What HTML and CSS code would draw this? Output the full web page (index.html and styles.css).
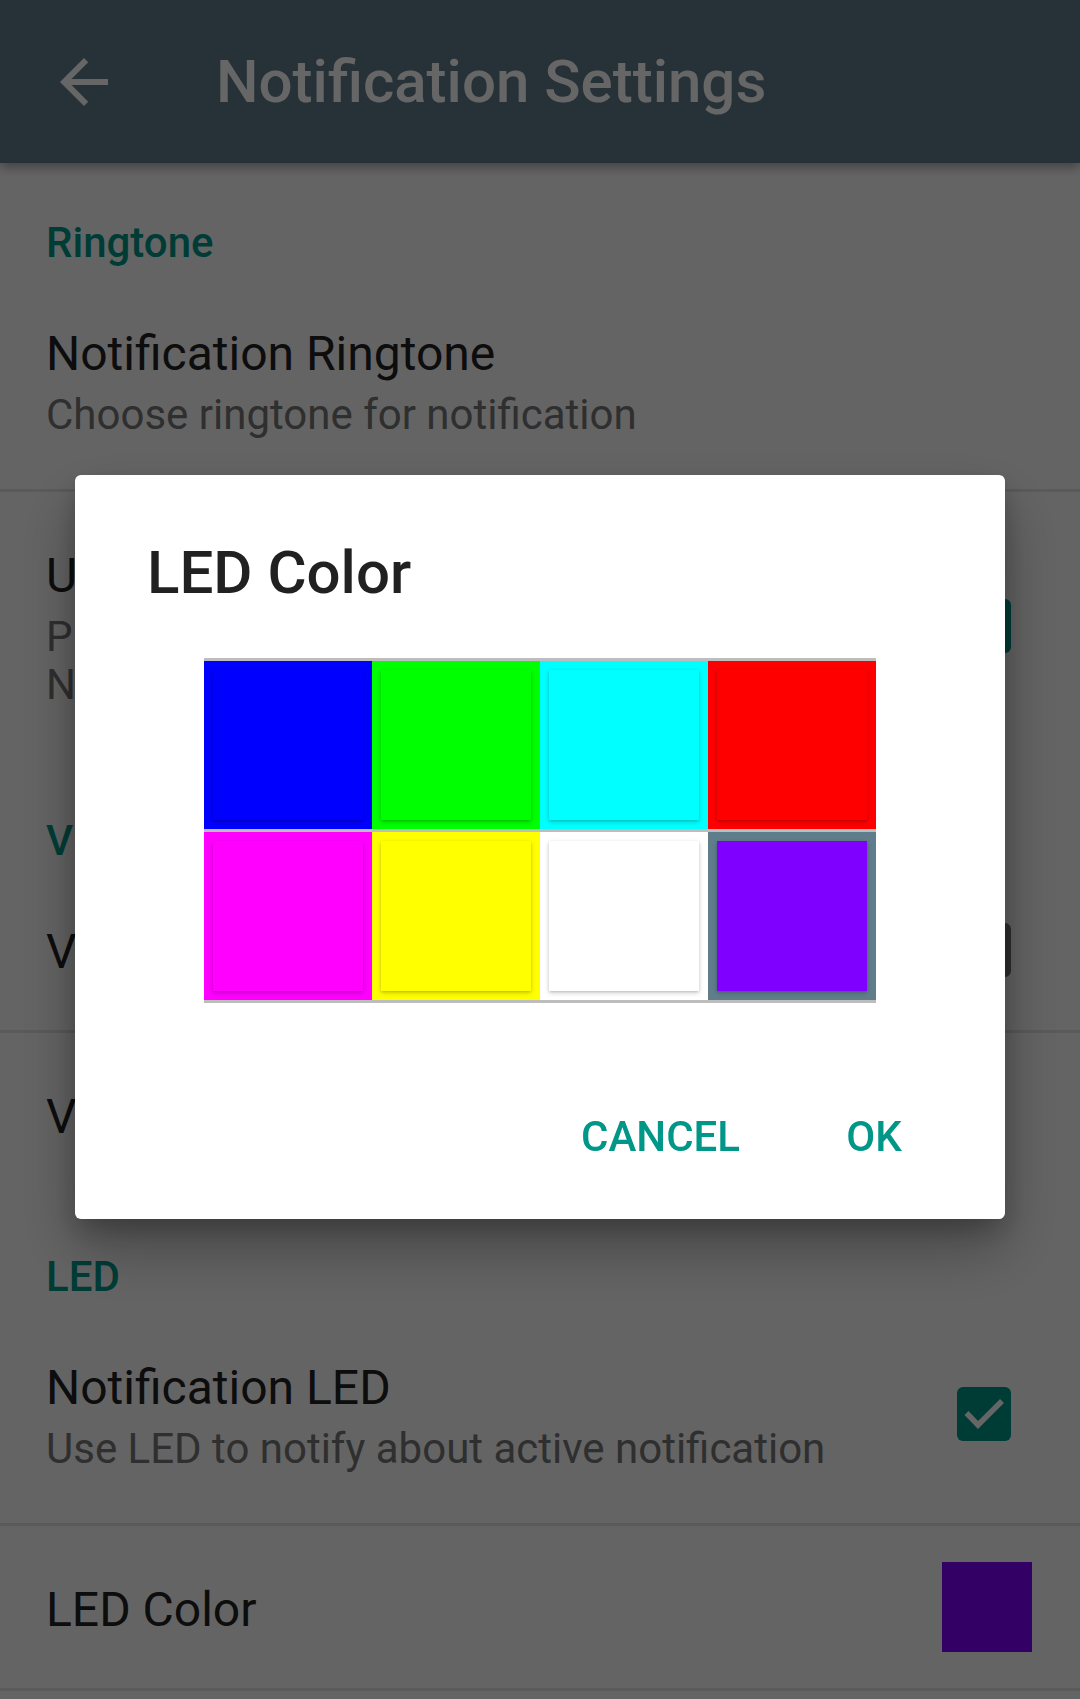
FILE: index.html
```html
<!DOCTYPE html>
<html lang="en">
<head>
<meta charset="utf-8">
<title>Notification Settings</title>
<link rel="stylesheet" href="styles.css">
</head>
<body>
<div class="app">
  <header class="appbar">
    <svg class="back" viewBox="0 0 24 24"><path d="M20 11H7.83l5.59-5.59L12 4l-8 8 8 8 1.41-1.41L7.83 13H20v-2z"/></svg>
    <h1 class="appbar-title">Notification Settings</h1>
  </header>
  <main class="prefs">
    <div class="category">Ringtone</div>
    <div class="pref">
      <div class="pref-text">
        <div class="pref-title">Notification Ringtone</div>
        <div class="pref-summary">Choose ringtone for notification</div>
      </div>
    </div>
    <div class="divider"></div>
    <div class="pref">
      <div class="pref-text">
        <div class="pref-title">Use Ringtone</div>
        <div class="pref-summary">Play a sound for every new notification<br>Notification ringtone is used</div>
      </div>
      <div class="checkbox checked"><svg viewBox="0 0 54 54"><polyline points="9.5,26 21,38 45,14"/></svg></div>
    </div>
    <div class="category">Vibration</div>
    <div class="pref">
      <div class="pref-text">
        <div class="pref-title">Vibrate</div>
      </div>
      <div class="checkbox"></div>
    </div>
    <div class="divider"></div>
    <div class="pref">
      <div class="pref-text">
        <div class="pref-title">Vibration Pattern</div>
      </div>
    </div>
    <div class="category">LED</div>
    <div class="pref">
      <div class="pref-text">
        <div class="pref-title">Notification LED</div>
        <div class="pref-summary">Use LED to notify about active notification</div>
      </div>
      <div class="checkbox checked"><svg viewBox="0 0 54 54"><polyline points="9.5,26 21,38 45,14"/></svg></div>
    </div>
    <div class="divider"></div>
    <div class="pref">
      <div class="pref-text">
        <div class="pref-title">LED Color</div>
      </div>
      <div class="swatch"></div>
    </div>
    <div class="divider"></div>
  </main>
</div>

<div class="scrim">
  <div class="dialog">
    <h2 class="dialog-title">LED Color</h2>
    <div class="grid">
      <div class="cell blue"><div class="chip"></div></div>
      <div class="cell green"><div class="chip"></div></div>
      <div class="cell cyan"><div class="chip"></div></div>
      <div class="cell red"><div class="chip"></div></div>
      <div class="cell magenta"><div class="chip"></div></div>
      <div class="cell yellow"><div class="chip"></div></div>
      <div class="cell white"><div class="chip"></div></div>
      <div class="cell purple selected"><div class="chip"></div></div>
    </div>
    <div class="actions">
      <button class="btn">CANCEL</button>
      <button class="btn">OK</button>
    </div>
  </div>
</div>
</body>
</html>
```
FILE: styles.css
```css
html, body {
  margin: 0;
  padding: 0;
}
body {
  width: 1080px;
  height: 1699px;
  overflow: hidden;
  background: #FAFAFA;
  font-family: Roboto, "Noto Sans", "Liberation Sans", sans-serif;
  position: relative;
}

.appbar {
  height: 163px;
  background: #607D8B;
  display: flex;
  align-items: center;
  box-shadow: 0 4px 10px rgba(0, 0, 0, 0.35);
  position: relative;
  z-index: 1;
}
.back {
  width: 72px;
  height: 72px;
  margin-left: 48px;
  fill: #ffffff;
  flex: none;
}
.appbar-title {
  margin: 0 0 0 96px;
  font-size: 60px;
  line-height: 72px;
  font-weight: 500;
  color: #ffffff;
}

.category {
  padding: 52px 0 1px 46px;
  font-size: 42px;
  line-height: 56px;
  font-weight: 500;
  color: #009688;
}
.pref {
  display: flex;
  align-items: center;
  padding: 0 0 0 46px;
}
.pref-text {
  flex: 1;
  padding: 54px 0 52px;
}
.pref-title {
  font-size: 48px;
  line-height: 56px;
  color: #212121;
}
.pref-summary {
  margin-top: 9px;
  font-size: 42px;
  line-height: 48px;
  color: #757575;
}
.divider {
  height: 3px;
  margin: -2px 0 2px;
  background: #E0E0E0;
}

.checkbox {
  width: 54px;
  height: 54px;
  box-sizing: border-box;
  border: 6px solid #757575;
  border-radius: 6px;
  margin: 0 69px 3px 0;
  flex: none;
}
.checkbox.checked {
  border: none;
  background: #009688;
}
.checkbox svg {
  display: block;
  width: 54px;
  height: 54px;
  fill: none;
  stroke: #ffffff;
  stroke-width: 5.5;
}
.swatch {
  width: 90px;
  height: 90px;
  background: #8000FF;
  margin: 0 48px 4px 0;
  flex: none;
}

.scrim {
  position: fixed;
  inset: 0;
  background: rgba(0, 0, 0, 0.6);
  display: flex;
  align-items: center;
  justify-content: center;
  padding-bottom: 5px;
  box-sizing: border-box;
  z-index: 10;
}
.dialog {
  width: 930px;
  background: #ffffff;
  border-radius: 6px;
  padding: 62px 0 28px;
  box-sizing: border-box;
  box-shadow: 0 30px 60px rgba(0, 0, 0, 0.3), 0 12px 24px rgba(0, 0, 0, 0.2);
}
.dialog-title {
  margin: 0 0 49px 72px;
  font-size: 60px;
  line-height: 72px;
  font-weight: 500;
  color: #212121;
}
.grid {
  width: 672px;
  margin: 0 auto;
  display: grid;
  grid-template-columns: repeat(4, 168px);
  grid-auto-rows: 168px;
  row-gap: 3px;
  padding: 3px 0;
  background: #BDBDBD;
}
.cell {
  padding: 9px;
  box-sizing: border-box;
}
.chip {
  width: 150px;
  height: 150px;
  box-shadow: 0 2px 5px rgba(0, 0, 0, 0.18), 0 1px 2px rgba(0, 0, 0, 0.12);
}
.blue, .blue .chip { background: #0000FF; }
.green, .green .chip { background: #00FF00; }
.cyan, .cyan .chip { background: #00FFFF; }
.red, .red .chip { background: #FF0000; }
.magenta, .magenta .chip { background: #FF00FF; }
.yellow, .yellow .chip { background: #FFFF00; }
.white, .white .chip { background: #FFFFFF; }
.purple .chip { background: #8000FF; }
.purple.selected { background: #607D8B; }

.actions {
  display: flex;
  justify-content: flex-end;
  gap: 14px;
  padding-right: 35px;
  margin-top: 80px;
}
.btn {
  min-width: 192px;
  height: 108px;
  padding: 0 24px;
  box-sizing: border-box;
  border: none;
  background: none;
  font-family: inherit;
  font-size: 42px;
  line-height: 108px;
  font-weight: 500;
  color: #009688;
  text-align: center;
}
```
